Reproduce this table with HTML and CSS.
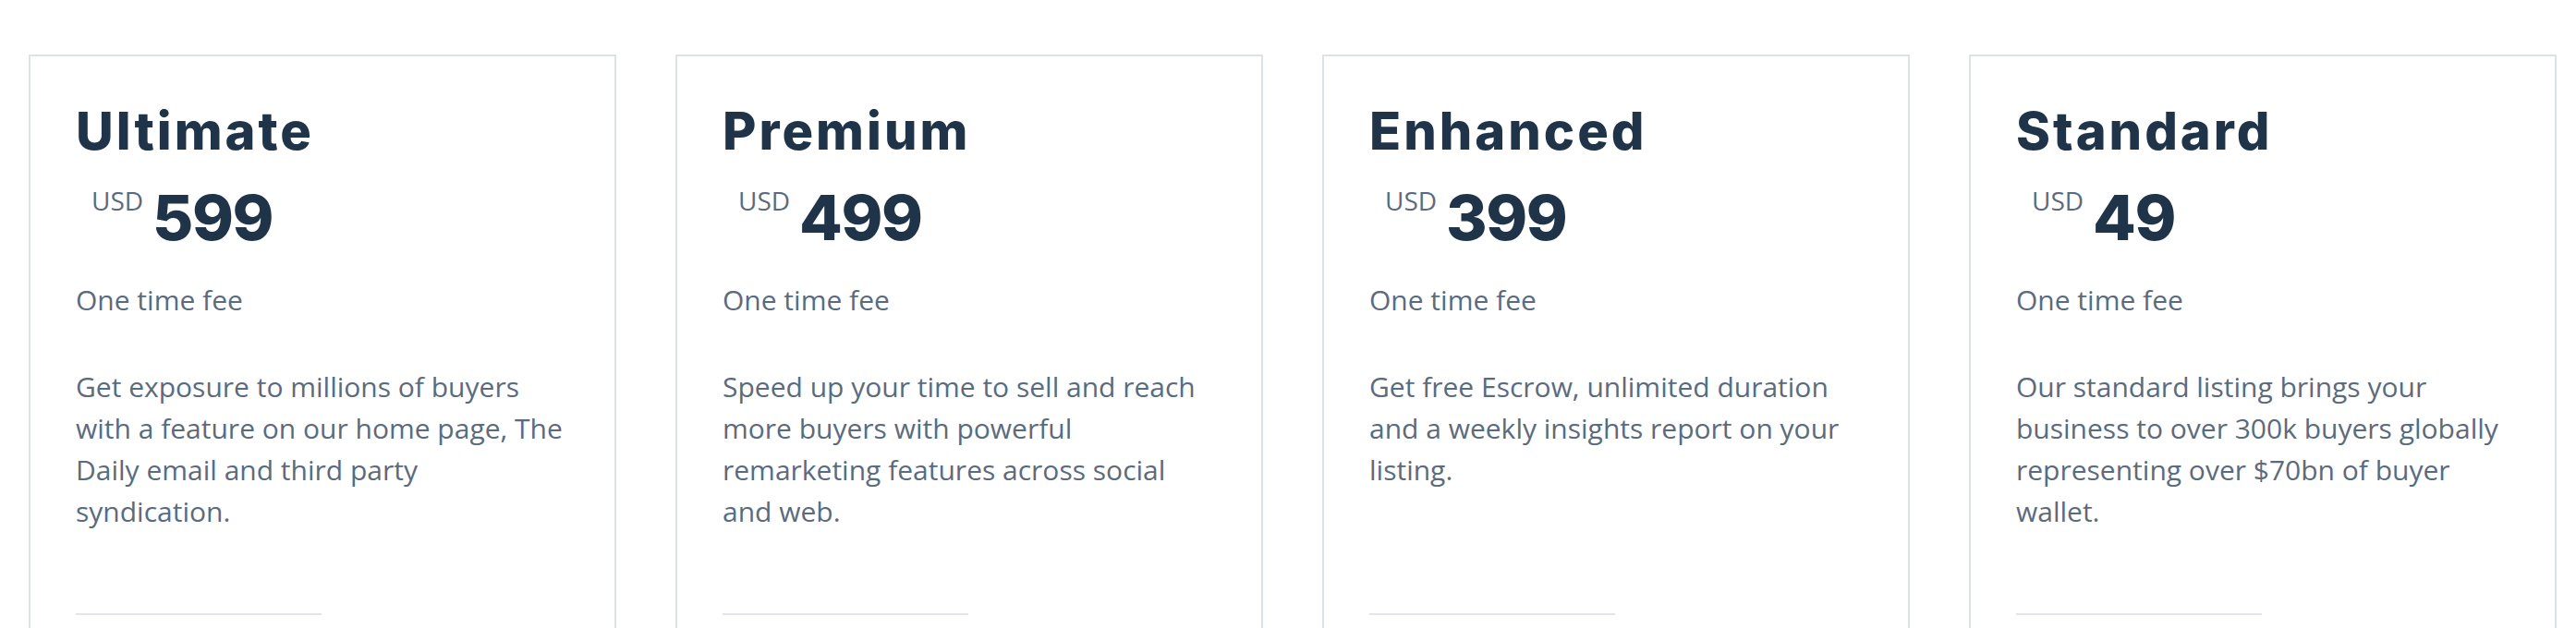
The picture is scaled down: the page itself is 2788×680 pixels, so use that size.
FILE: index.html
```html
<!DOCTYPE html>
<html lang="en">
<head>
<meta charset="utf-8">
<title>Listing plans</title>
<link rel="stylesheet" href="styles.css">
</head>
<body>
<div class="plans">
  <div class="card">
    <h2 class="title">Ultimate</h2>
    <div class="price"><span class="cur">USD</span><span class="amount">599</span></div>
    <p class="fee">One time fee</p>
    <p class="desc">Get exposure to millions of buyers with a feature on our home page, The Daily email and third party syndication.</p>
    <hr class="rule">
  </div>
  <div class="card">
    <h2 class="title">Premium</h2>
    <div class="price"><span class="cur">USD</span><span class="amount">499</span></div>
    <p class="fee">One time fee</p>
    <p class="desc">Speed up your time to sell and reach more buyers with powerful remarketing features across social and web.</p>
    <hr class="rule">
  </div>
  <div class="card">
    <h2 class="title">Enhanced</h2>
    <div class="price"><span class="cur">USD</span><span class="amount">399</span></div>
    <p class="fee">One time fee</p>
    <p class="desc">Get free Escrow, unlimited duration and a weekly insights report on your listing.</p>
    <hr class="rule">
  </div>
  <div class="card">
    <h2 class="title">Standard</h2>
    <div class="price"><span class="cur">USD</span><span class="amount">49</span></div>
    <p class="fee">One time fee</p>
    <p class="desc">Our standard listing brings your business to over 300k buyers globally representing over $70bn of buyer wallet.</p>
    <hr class="rule">
  </div>
</div>
</body>
</html>
```
FILE: styles.css
```css
html, body {
  margin: 0;
  padding: 0;
  background: #ffffff;
}
body {
  font-family: "Open Sans", "Liberation Sans", sans-serif;
  color: #5b6b7e;
  overflow: hidden;
  height: 680px;
}
.plans {
  display: grid;
  grid-template-columns: repeat(4, 636px);
  column-gap: 64px;
  padding: 59px 21px 0 31px;
}
.card {
  border: 2px solid #dde2e7;
  border-bottom: 0;
  padding: 48px 49px 0 49px;
  height: 621px;
  box-sizing: border-box;
  overflow: hidden;
}
.title {
  margin: 0;
  font-family: Inter, "DejaVu Sans", sans-serif;
  font-weight: 800;
  font-size: 56px;
  line-height: 67px;
  letter-spacing: 3px;
  color: #1f3349;
}
.price {
  display: flex;
  align-items: flex-start;
  margin-top: 25px;
  padding-left: 17px;
}
.cur {
  font-size: 28px;
  line-height: 28px;
  margin-top: 2px;
  margin-right: 10px;
  color: #5b6b7e;
}
.amount {
  font-family: Inter, "DejaVu Sans", sans-serif;
  font-weight: 800;
  font-size: 68px;
  line-height: 68px;
  color: #1f3349;
  letter-spacing: -1.5px;
}
.fee {
  margin: 33px 0 0 0;
  font-size: 30px;
  line-height: 45px;
}
.desc {
  margin: 49px 0 0 0;
  font-size: 30px;
  line-height: 45px;
  min-height: 180px;
}
.rule {
  margin: 88px 0 0 0;
  width: 266px;
  border: 0;
  height: 2px;
  background: #e1e5ea;
}
```
